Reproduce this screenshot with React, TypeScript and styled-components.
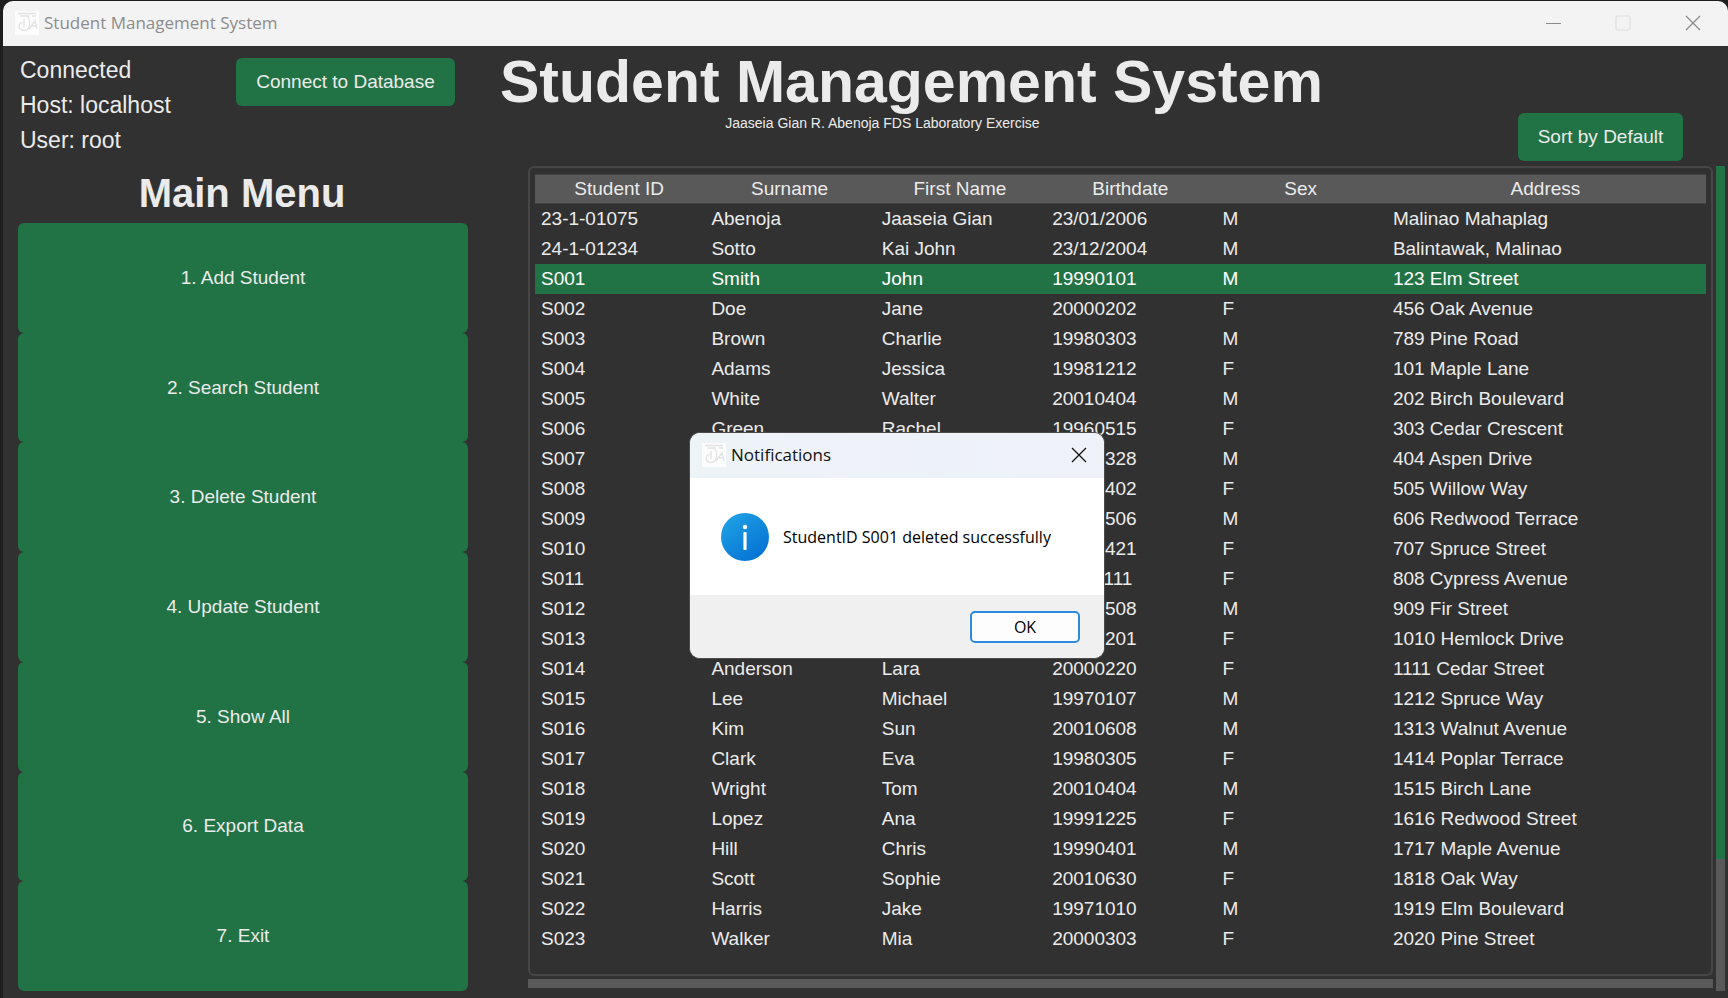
import React from "react";
import styled, { createGlobalStyle, css } from "styled-components";

const sans = `"Liberation Sans", Arial, sans-serif`;
const system = `"Open Sans", "Noto Sans", sans-serif`;

const GlobalStyle = createGlobalStyle`
  *, *::before, *::after { box-sizing: border-box; }
  body { margin: 0; background: #1e1e1e; font-family: ${sans}; }
  button { font: inherit; cursor: pointer; }
`;

const Desktop = styled.div`
  min-height: 100vh;
  padding: 1px 0 0 3px;
  display: flex;
`;

const Window = styled.div`
  position: relative;
  flex: 1;
  min-width: 0;
  display: flex;
  flex-direction: column;
  background: #313131;
  color: #ebebeb;
  border-radius: 10px 10px 0 0;
  overflow: hidden;
`;

const TitleBar = styled.header<{ $active?: boolean }>`
  display: flex;
  align-items: center;
  gap: 5px;
  height: 45px;
  padding: 0 0 2px 12px;
  font-family: ${system};
  font-size: 17px;
  color: ${(p) => (p.$active ? "#111111" : "#8c8c8c")};
  background: ${(p) =>
    p.$active ? "linear-gradient(90deg, #ecf4f7, #eff3f9 30%, #edf2f8 60%, #f0f2fa)" : "#f3f3f3"};
`;

const Caption = styled.span`
  flex: 1;
  padding-bottom: 1px;
`;

const CaptionButton = styled.button<{ $width: number }>`
  display: flex;
  align-items: center;
  justify-content: center;
  width: ${(p) => p.$width}px;
  height: 43px;
  padding: 0;
  border: 0;
  background: none;
  color: inherit;
`;

const Main = styled.main`
  flex: 1;
  display: flex;
  gap: 32px;
  padding: 0 3px 7px 15px;
`;

const Sidebar = styled.aside`
  flex: 0 0 450px;
  display: flex;
  flex-direction: column;
`;

const Connection = styled.div`
  display: flex;
  justify-content: space-between;
  align-items: flex-start;
  padding: 7px 13px 0 2px;
`;

const Status = styled.p`
  margin: 0;
  font-size: 23px;
  line-height: 35px;
`;

const greenButton = css`
  border: 0;
  border-radius: 6px;
  background: #217346;
  color: #ebebeb;
  font-size: 19px;
`;

const ActionButton = styled.button<{ $width: number }>`
  ${greenButton}
  width: ${(p) => p.$width}px;
  height: 48px;
  padding: 0;
`;

const ConnectSlot = styled.div`
  padding-top: 5px;
`;

const MenuTitle = styled.h2`
  margin: 12px 0 6px;
  padding-right: 2px;
  text-align: center;
  font-size: 40px;
  line-height: 47px;
`;

const Menu = styled.nav`
  flex: 1;
  display: flex;
  flex-direction: column;
`;

const MenuButton = styled.button`
  ${greenButton}
  flex: 1;
  min-height: 60px;
`;

const Content = styled.section`
  flex: 1;
  min-width: 0;
  display: flex;
  flex-direction: column;
`;

const Heading = styled.div`
  display: flex;
  justify-content: space-between;
  align-items: flex-end;
  height: 120px;
  padding-right: 42px;
`;

const TitleBlock = styled.div`
  align-self: flex-start;
  padding-top: 3px;
  text-align: center;
`;

const Title = styled.h1`
  margin: 0;
  font-size: 59px;
  line-height: 66px;
  white-space: nowrap;
`;

const Subtitle = styled.p`
  margin: 0;
  padding-right: 58px;
  font-size: 14px;
  line-height: 16px;
`;

const SortSlot = styled.div`
  padding-bottom: 5px;
`;

const TableArea = styled.div`
  flex: 1;
  display: grid;
  grid-template-columns: 1fr 9px;
  grid-template-rows: 1fr 12px;
  gap: 3px;
  padding-left: 28px;
`;

const TableFrame = styled.div`
  border: 2px solid #464646;
  border-radius: 6px;
  padding: 6px 5px 5px;
`;

const HorizontalTrack = styled.div`
  height: 9px;
  background: #595959;
`;

const VerticalTrack = styled.div`
  grid-row: 1 / 3;
  grid-column: 2;
  background: #595959;
`;

const Thumb = styled.div`
  height: 84%;
  background: #217346;
`;

const Table = styled.table`
  width: 100%;
  table-layout: fixed;
  border-collapse: collapse;
  font-size: 19px;
  line-height: 22px;
`;

const Col = styled.col<{ $wide?: boolean }>`
  width: ${(p) => (p.$wide ? "auto" : "14.55%")};
`;

const HeadCell = styled.th`
  height: 30px;
  padding: 0 2px 0 0;
  background: #595959;
  font-weight: 400;
  box-shadow: inset 0 1px #444444, inset 0 -1px #444444;
`;

const Row = styled.tr<{ $selected: boolean }>`
  background: ${(p) => (p.$selected ? "#217346" : "transparent")};
  color: ${(p) => (p.$selected ? "#ffffff" : "#ebebeb")};
`;

const Cell = styled.td`
  height: 30px;
  padding: 0 6px;
  white-space: nowrap;
`;

const Dialog = styled.div`
  position: absolute;
  left: 40%;
  top: 431px;
  width: 416px;
  margin-left: -4px;
  border: 1px solid #4c4c4c;
  border-radius: 11px;
  overflow: hidden;
  background: #ffffff;
  color: #000000;
  font-family: ${system};
`;

const DialogBody = styled.div`
  display: flex;
  align-items: center;
  gap: 14px;
  height: 117px;
  padding-left: 31px;
  font-size: 16px;
`;

const Message = styled.p`
  margin: 0;
`;

const DialogFooter = styled.div`
  display: flex;
  justify-content: flex-end;
  align-items: center;
  height: 63px;
  padding-right: 24px;
  background: #f0f0f0;
`;

const OkButton = styled.button`
  width: 110px;
  height: 32px;
  padding: 0;
  border: 2px solid #2b8bdc;
  border-radius: 5px;
  background: #fdfdfd;
  color: #000000;
  font-size: 16px;
  line-height: 24px;
`;

const Logo = () => (
  <svg width="24" height="24" viewBox="0 0 24 24" aria-hidden="true">
    <rect width="24" height="24" fill="#fdfdfd" />
    <g fill="none" stroke="#e2e2e2" strokeWidth="1.3">
      <path d="M3 2.5h18M5 5h9M17 5h4M12 5c3 3 3 8 2 11-2 5-9 4-10 0 0-4 2-5 4-4M9 8v8" />
      <path d="M14 18l6-8 2 8M17 15h5" />
    </g>
  </svg>
);

const CloseIcon = () => (
  <svg width="16" height="16" viewBox="0 0 16 16" aria-hidden="true">
    <path d="M1 1l14 14M15 1L1 15" stroke="currentColor" strokeWidth="1.3" />
  </svg>
);

const MinimizeIcon = () => (
  <svg width="16" height="16" viewBox="0 0 16 16" aria-hidden="true">
    <path d="M0 8.5h15" stroke="currentColor" />
  </svg>
);

const MaximizeIcon = () => (
  <svg width="16" height="16" viewBox="0 0 16 16" aria-hidden="true">
    <rect x="1" y="1" width="14" height="14" rx="1.5" fill="none" stroke="#dedede" strokeWidth="1.2" />
  </svg>
);

const InfoIcon = () => (
  <svg width="48" height="48" viewBox="0 0 48 48" role="img" aria-label="Information">
    <defs>
      <linearGradient id="info" x1="0.15" y1="0.1" x2="0.8" y2="0.95">
        <stop offset="0" stopColor="#1e9fe3" />
        <stop offset="1" stopColor="#0472d4" />
      </linearGradient>
    </defs>
    <circle cx="24" cy="24" r="24" fill="url(#info)" />
    <circle cx="24" cy="14" r="2.2" fill="#ffffff" />
    <rect x="22.4" y="19" width="3.2" height="18" rx="1" fill="#ffffff" />
  </svg>
);

const columns = ["Student ID", "Surname", "First Name", "Birthdate", "Sex", "Address"];

const students: string[][] = [
  ["23-1-01075", "Abenoja", "Jaaseia Gian", "23/01/2006", "M", "Malinao Mahaplag"],
  ["24-1-01234", "Sotto", "Kai John", "23/12/2004", "M", "Balintawak, Malinao"],
  ["S001", "Smith", "John", "19990101", "M", "123 Elm Street"],
  ["S002", "Doe", "Jane", "20000202", "F", "456 Oak Avenue"],
  ["S003", "Brown", "Charlie", "19980303", "M", "789 Pine Road"],
  ["S004", "Adams", "Jessica", "19981212", "F", "101 Maple Lane"],
  ["S005", "White", "Walter", "20010404", "M", "202 Birch Boulevard"],
  ["S006", "Green", "Rachel", "19960515", "F", "303 Cedar Crescent"],
  ["S007", "", "", "19980328", "M", "404 Aspen Drive"],
  ["S008", "", "", "20000402", "F", "505 Willow Way"],
  ["S009", "", "", "19990506", "M", "606 Redwood Terrace"],
  ["S010", "", "", "20010421", "F", "707 Spruce Street"],
  ["S011", "", "", "19981111", "F", "808 Cypress Avenue"],
  ["S012", "", "", "19970508", "M", "909 Fir Street"],
  ["S013", "", "", "19991201", "F", "1010 Hemlock Drive"],
  ["S014", "Anderson", "Lara", "20000220", "F", "1111 Cedar Street"],
  ["S015", "Lee", "Michael", "19970107", "M", "1212 Spruce Way"],
  ["S016", "Kim", "Sun", "20010608", "M", "1313 Walnut Avenue"],
  ["S017", "Clark", "Eva", "19980305", "F", "1414 Poplar Terrace"],
  ["S018", "Wright", "Tom", "20010404", "M", "1515 Birch Lane"],
  ["S019", "Lopez", "Ana", "19991225", "F", "1616 Redwood Street"],
  ["S020", "Hill", "Chris", "19990401", "M", "1717 Maple Avenue"],
  ["S021", "Scott", "Sophie", "20010630", "F", "1818 Oak Way"],
  ["S022", "Harris", "Jake", "19971010", "M", "1919 Elm Boulevard"],
  ["S023", "Walker", "Mia", "20000303", "F", "2020 Pine Street"],
];

const menuItems = [
  "1. Add Student",
  "2. Search Student",
  "3. Delete Student",
  "4. Update Student",
  "5. Show All",
  "6. Export Data",
  "7. Exit",
];

export default function App() {
  return (
    <>
      <GlobalStyle />
      <Desktop>
        <Window>
          <TitleBar>
            <Logo />
            <Caption>Student Management System</Caption>
            <CaptionButton $width={69} aria-label="Minimize"><MinimizeIcon /></CaptionButton>
            <CaptionButton $width={60} aria-label="Maximize" disabled><MaximizeIcon /></CaptionButton>
            <CaptionButton $width={70} aria-label="Close"><CloseIcon /></CaptionButton>
          </TitleBar>
          <Main>
            <Sidebar>
              <Connection>
                <div>
                  <Status>Connected</Status>
                  <Status>Host: localhost</Status>
                  <Status>User: root</Status>
                </div>
                <ConnectSlot>
                  <ActionButton $width={219}>Connect to Database</ActionButton>
                </ConnectSlot>
              </Connection>
              <MenuTitle>Main Menu</MenuTitle>
              <Menu>
                {menuItems.map((item) => (
                  <MenuButton key={item}>{item}</MenuButton>
                ))}
              </Menu>
            </Sidebar>
            <Content>
              <Heading>
                <TitleBlock>
                  <Title>Student Management System</Title>
                  <Subtitle>Jaaseia Gian R. Abenoja FDS Laboratory Exercise</Subtitle>
                </TitleBlock>
                <SortSlot>
                  <ActionButton $width={165}>Sort by Default</ActionButton>
                </SortSlot>
              </Heading>
              <TableArea>
                <TableFrame>
                  <Table>
                    <colgroup>
                      {columns.map((name, i) => (
                        <Col key={name} $wide={i === columns.length - 1} />
                      ))}
                    </colgroup>
                    <thead>
                      <tr>
                        {columns.map((name) => (
                          <HeadCell key={name} scope="col">{name}</HeadCell>
                        ))}
                      </tr>
                    </thead>
                    <tbody>
                      {students.map((student) => (
                        <Row key={student[0]} $selected={student[0] === "S001"}>
                          {student.map((value, i) => (
                            <Cell key={columns[i]}>{value}</Cell>
                          ))}
                        </Row>
                      ))}
                    </tbody>
                  </Table>
                </TableFrame>
                <VerticalTrack>
                  <Thumb />
                </VerticalTrack>
                <HorizontalTrack />
              </TableArea>
            </Content>
          </Main>
          <Dialog role="dialog" aria-label="Notifications">
            <TitleBar $active>
              <Logo />
              <Caption>Notifications</Caption>
              <CaptionButton $width={50} aria-label="Close"><CloseIcon /></CaptionButton>
            </TitleBar>
            <DialogBody>
              <InfoIcon />
              <Message>StudentID S001 deleted successfully</Message>
            </DialogBody>
            <DialogFooter>
              <OkButton>OK</OkButton>
            </DialogFooter>
          </Dialog>
        </Window>
      </Desktop>
    </>
  );
}
